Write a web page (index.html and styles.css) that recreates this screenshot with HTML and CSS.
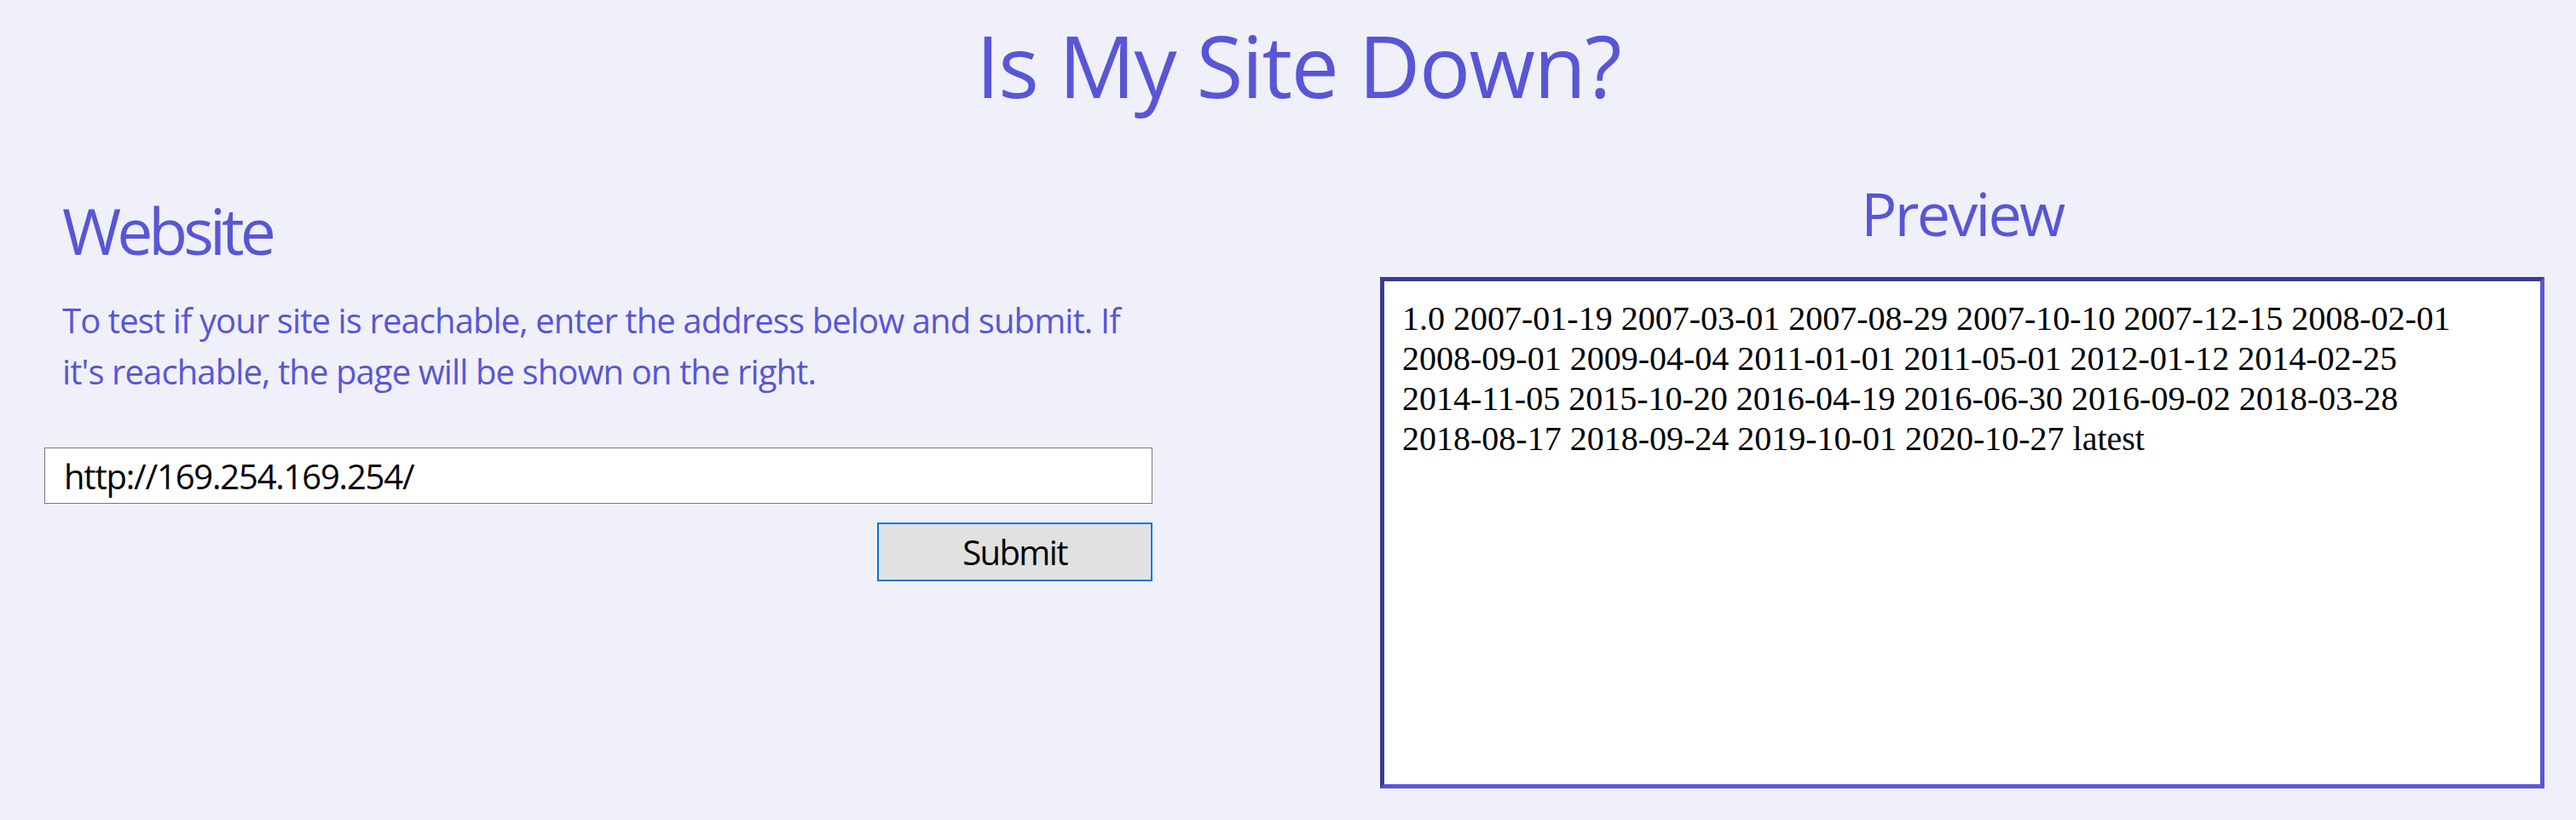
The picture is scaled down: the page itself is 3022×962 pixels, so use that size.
FILE: index.html
```html
<!DOCTYPE html>
<html lang="en">
<head>
<meta charset="utf-8">
<title>Is My Site Down?</title>
<link rel="stylesheet" href="styles.css">
</head>
<body>
<h1 class="title">Is My Site Down?</h1>
<main class="layout">
  <section class="form-col">
    <h2 class="form-heading">Website</h2>
    <p class="intro">To test if your site is reachable, enter the address below and submit. If it's reachable, the page will be shown on the right.</p>
    <form class="url-form">
      <input class="url-input" type="text" value="http://169.254.169.254/">
      <button class="submit-btn" type="button">Submit</button>
    </form>
  </section>
  <section class="preview-col">
    <h2 class="preview-heading">Preview</h2>
    <div class="preview-frame"><span class="ver">1.0</span> <span class="ver">2007-01-19</span> <span class="ver">2007-03-01</span> <span class="ver">2007-08-29</span> <span class="ver">2007-10-10</span> <span class="ver">2007-12-15</span> <span class="ver">2008-02-01</span> <span class="ver">2008-09-01</span> <span class="ver">2009-04-04</span> <span class="ver">2011-01-01</span> <span class="ver">2011-05-01</span> <span class="ver">2012-01-12</span> <span class="ver">2014-02-25</span> <span class="ver">2014-11-05</span> <span class="ver">2015-10-20</span> <span class="ver">2016-04-19</span> <span class="ver">2016-06-30</span> <span class="ver">2016-09-02</span> <span class="ver">2018-03-28</span> <span class="ver">2018-08-17</span> <span class="ver">2018-09-24</span> <span class="ver">2019-10-01</span> <span class="ver">2020-10-27</span> <span class="ver">latest</span></div>
  </section>
</main>
</body>
</html>
```
FILE: styles.css
```css
html, body {
  margin: 0;
  padding: 0;
}
body {
  background: #f0f0fa;
  color: #5856d6;
  font-family: "Open Sans", "Noto Sans", sans-serif;
  width: 3022px;
  height: 962px;
  overflow: hidden;
}
.title {
  margin: 0;
  padding: 16px 0 0 24px;
  font-size: 100px;
  line-height: 120px;
  font-weight: 400;
  letter-spacing: -1.5px;
  text-align: center;
}
.layout {
  display: flex;
  padding-left: 52px;
}
.form-col {
  width: 1300px;
  display: flex;
  flex-direction: column;
}
.form-heading {
  margin: 89px 0 0 21px;
  font-size: 75px;
  line-height: 90px;
  font-weight: 400;
  letter-spacing: -5px;
}
.intro {
  margin: 31px 0 0 21px;
  width: 1270px;
  font-size: 40px;
  line-height: 60px;
  letter-spacing: -0.9px;
}
.url-form {
  margin-top: 59px;
  display: flex;
  flex-direction: column;
  align-items: flex-end;
  gap: 22px;
}
.url-input {
  box-sizing: border-box;
  width: 1300px;
  height: 66px;
  margin: 0;
  padding: 0 22px;
  border: 1px solid #7a7a7a;
  background: #fff;
  font-family: "Open Sans", "Noto Sans", sans-serif;
  font-size: 40px;
  letter-spacing: -1.2px;
  color: #000;
  outline: none;
}
.submit-btn {
  box-sizing: border-box;
  width: 323px;
  height: 69px;
  margin: 0;
  padding: 0;
  border: 2px solid #0078d7;
  background: #e1e1e1;
  font-family: "Open Sans", "Noto Sans", sans-serif;
  font-size: 40px;
  letter-spacing: -1.6px;
  color: #000;
}
.preview-col {
  margin-left: 267px;
  width: 1366px;
  display: flex;
  flex-direction: column;
}
.preview-heading {
  margin: 72px 0 0;
  font-size: 70px;
  line-height: 84px;
  font-weight: 400;
  letter-spacing: -2.7px;
  text-align: center;
}
.preview-frame {
  box-sizing: border-box;
  margin-top: 33px;
  width: 1366px;
  height: 600px;
  padding: 20px 21px;
  background: #fff;
  border: 5px solid;
  border-color: #3c3a94 #5856d6 #5856d6 #3c3a94;
  color: #000;
  font-family: "Liberation Serif", "Times New Roman", serif;
  font-size: 40px;
  line-height: 47px;
}
.ver {
  white-space: nowrap;
}
```
